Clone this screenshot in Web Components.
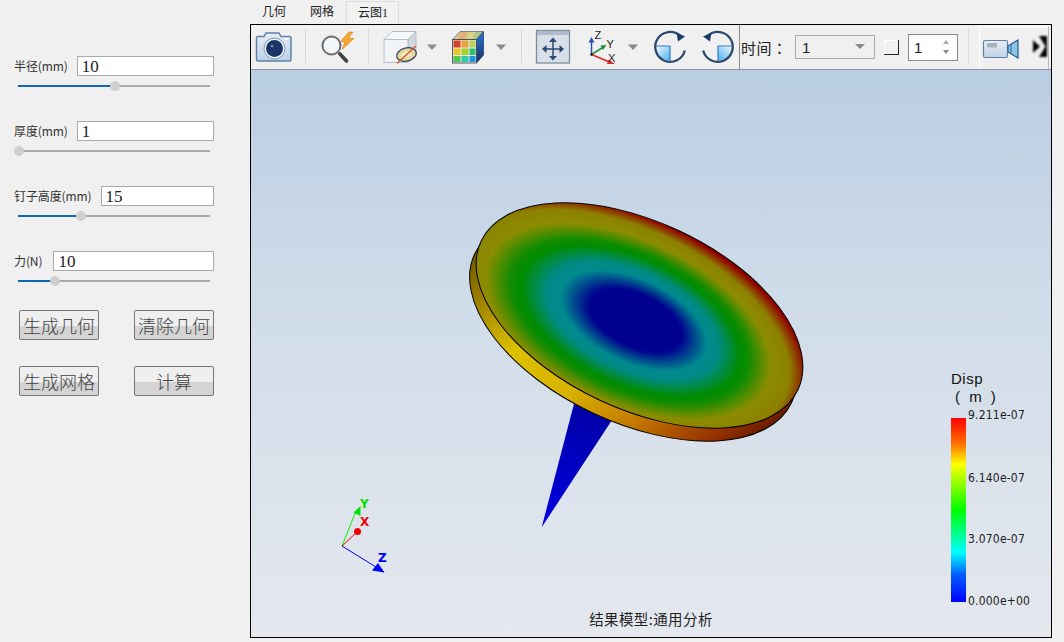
<!DOCTYPE html>
<html>
<head>
<meta charset="utf-8">
<style>
    html, body { margin: 0; height: 100%; background: #f0f0f0; overflow: hidden; }
    body { font-family: "Noto Sans CJK SC", "Liberation Sans", sans-serif; }
    svg { display: block; }
</style>
</head>
<body>
<app-shell>
    <side-panel slot="side">
        <param-row label="半径(mm)" value="10" percent="51"></param-row>
        <param-row label="厚度(mm)" value="1" percent="0"></param-row>
        <param-row label="钉子高度(mm)" value="15" percent="33"></param-row>
        <param-row label="力(N)" value="10" percent="19" gap="11"></param-row>
        <div slot="buttons">
            <push-button>生成几何</push-button>
            <push-button>清除几何</push-button>
            <push-button>生成网格</push-button>
            <push-button>计算</push-button>
        </div>
    </side-panel>
    <tab-bar slot="tabs">
        <tab-item>几何</tab-item>
        <tab-item>网格</tab-item>
        <tab-item active>云图1</tab-item>
    </tab-bar>
    <tool-bar slot="toolbar">
        <tool-button w="54">
            <svg width="54" height="44" viewBox="251 25 54 44">
                <defs><linearGradient id="camBody" x1="0" y1="0" x2="0" y2="1"><stop offset="0" stop-color="#e6eef7"/><stop offset="1" stop-color="#bcd0e6"/></linearGradient></defs>
                <path d="M258 36.500h6l2-3.500h13l2 3.500h8.500a1.500 1.500 0 0 1 1.500 1.500v21.500a1.500 1.500 0 0 1-1.500 1.500h-31.500a1.500 1.500 0 0 1-1.500-1.500v-21.500a1.500 1.500 0 0 1 1.500-1.500z" fill="url(#camBody)" stroke="#5f82a8" stroke-width="1.500"/>
                <circle cx="274.500" cy="48.500" r="10.500" fill="#f2f6fa" stroke="#7c98b6"/>
                <circle cx="274.500" cy="48.500" r="8.500" fill="#1c3566"/>
                <circle cx="272" cy="46" r="1.300" fill="#6f8fc0"/>
                <rect x="284" y="38" width="4" height="2" fill="#ffffff"/>
            </svg>
        </tool-button>
        <tool-sep></tool-sep>
        <tool-button w="62">
            <svg width="62" height="44" viewBox="306 25 62 44">
                <circle cx="331.500" cy="45.500" r="9" fill="#f4f5f6" stroke="#6a6f75" stroke-width="2"/>
                <path d="M338 52l2 2" stroke="#8a8f94" stroke-width="2.500"/>
                <path d="M340 54l6.500 7" stroke="#3d4247" stroke-width="3.600" stroke-linecap="round"/>
                <path d="M349 32l-8.500 9.500 4.500.5-3 7.500 12-11-5.500-.5 4.500-6z" fill="#f2a72e" stroke="#d87d16" stroke-width=".6"/>
            </svg>
        </tool-button>
        <tool-sep></tool-sep>
        <tool-button w="76">
            <svg width="76" height="44" viewBox="369 25 76 44">
                <path d="M384 39.500l8-8h24l-8 8z" fill="#f7f8f9" stroke="#b4bfca"/>
                <path d="M408 39.500l8-8v23l-8 8z" fill="#d3d7dc" stroke="#b4bfca"/>
                <rect x="384" y="39.500" width="24" height="23" fill="#f1f3f5" stroke="#b4bfca"/>
                <ellipse cx="406.500" cy="54.500" rx="10" ry="6.500" transform="rotate(-14 406.500 54.500)" fill="#e8d79c" stroke="#2f4560" stroke-width="1.300"/>
                <ellipse cx="406.500" cy="54.500" rx="5.500" ry="3" transform="rotate(-14 406.500 54.500)" fill="#f0e7c4"/>
                <path d="M397 63.500l19-17.500" stroke="#cc5a2c" stroke-width="1.500"/>
                <path d="M427 44.500h10l-5 5.500z" fill="#8a8a8a"/>
            </svg>
        </tool-button>
        <tool-button w="76">
            <svg width="76" height="44" viewBox="445 25 76 44">
                <defs><linearGradient id="cubeSide" x1="0" y1="0" x2="0" y2="1"><stop offset="0" stop-color="#2a78d8"/><stop offset="1" stop-color="#16305e"/></linearGradient></defs>
                <path d="M452.500 39.500l7.500-8h23.500l-7 8z" fill="#d9c68c" stroke="#555f6a" stroke-width=".7"/>
                <path d="M461 32h6.500l-2 7h-7z" fill="#e6b07a"/><path d="M468.500 32h6.500l-3 7h-5.500z" fill="#d9d48a"/><path d="M476 32h6.500l-6 7h-3.500z" fill="#a9c98c"/>
                <path d="M476.500 39.500l7-8v23.500l-7 8z" fill="url(#cubeSide)" stroke="#1b3560" stroke-width=".7"/>
                <rect x="452.500" y="39.500" width="24" height="23.500" fill="#e8e8d8" stroke="#2a3a50" stroke-width=".8"/>
                <rect x="453.500" y="40.500" width="7" height="7" fill="#d8402a"/><rect x="461.500" y="40.500" width="7" height="7" fill="#eaa23e"/><rect x="469.500" y="40.500" width="6" height="7" fill="#b8d060"/>
                <rect x="453.500" y="48.500" width="7" height="6.500" fill="#e8c424"/><rect x="461.500" y="48.500" width="7" height="6.500" fill="#a4d030"/><rect x="469.500" y="48.500" width="6" height="6.500" fill="#30c070"/>
                <rect x="453.500" y="56" width="7" height="6" fill="#50c850"/><rect x="461.500" y="56" width="7" height="6" fill="#30c8a8"/><rect x="469.500" y="56" width="6" height="6" fill="#2292e0"/>
                <path d="M496 44.500h10l-5 5.500z" fill="#8a8a8a"/>
            </svg>
        </tool-button>
        <tool-sep></tool-sep>
        <tool-button w="58">
            <svg width="58" height="44" viewBox="522 25 58 44">
                <rect x="536.500" y="30.500" width="33" height="32.500" fill="#d8dfe8" stroke="#7d8da0" stroke-width="1.300"/>
                <rect x="537" y="31" width="32" height="4" fill="#aebccd"/>
                <path d="M553 41v16M545 49h16" stroke="#2c4a6e" stroke-width="1.500"/>
                <path d="M553 37.500l-4 4.500h8zM553 60.500l-4-4.500h8zM542 49l4.500-4v8zM564 49l-4.500-4v8z" fill="#2c4a6e"/>
            </svg>
        </tool-button>
        <tool-button w="65">
            <svg width="65" height="44" viewBox="580 25 65 44">
                <path d="M591.500 54.500v-13" stroke="#2850b0" stroke-width="1.500"/><path d="M591.500 37l-3 5.500h6z" fill="#2850b0"/>
                <path d="M591.500 54.500l12-7.500" stroke="#1e9040" stroke-width="1.500"/><path d="M606.500 45l-6 .5 2.500 4.500z" fill="#1e9040"/>
                <path d="M591.500 54.500l18 7.500" stroke="#e02828" stroke-width="1.500"/><path d="M615 64l-6.500-4.500-1.500 4.500z" fill="#e02828"/>
                <circle cx="591.500" cy="54.500" r="1.200" fill="#111"/>
                <text x="594.500" y="38.500" font-family="Liberation Sans" font-size="11" fill="#222">Z</text>
                <text x="606.500" y="48" font-family="Liberation Sans" font-size="11" fill="#222">Y</text>
                <text x="608" y="62" font-family="Liberation Sans" font-size="11" fill="#222">X</text>
                <path d="M628 44.500h10l-5 5.500z" fill="#8a8a8a"/>
            </svg>
        </tool-button>
        <tool-button w="47">
            <svg width="47" height="44" viewBox="645 25 47 44">
                <defs><linearGradient id="rotFill" x1="0" y1="0" x2="1" y2="1"><stop offset="0" stop-color="#f4fbff"/><stop offset="1" stop-color="#4cb2ec"/></linearGradient></defs>
                <path d="M670 46H655.500A14.500 14.500 0 0 0 670 60.500z" fill="url(#rotFill)"/>
                <path d="M655 46h15v14.500" fill="none" stroke="#2f7fc4" stroke-width="1.200"/>
                <path d="M680 35.500A15 15 0 1 0 684.800 50.500" fill="none" stroke="#2d4a6e" stroke-width="2.300"/>
                <path d="M676.500 32.500l8.500 4-7 5z" fill="#1d3c66"/>
            </svg>
        </tool-button>
        <tool-button w="47">
            <svg width="47" height="44" viewBox="692 25 47 44">
                <g transform="translate(1388 0) scale(-1 1)">
                    <path d="M670 46H655.500A14.500 14.500 0 0 0 670 60.500z" fill="url(#rotFill)"/>
                    <path d="M655 46h15v14.500" fill="none" stroke="#2f7fc4" stroke-width="1.200"/>
                    <path d="M680 35.500A15 15 0 1 0 684.800 50.500" fill="none" stroke="#2d4a6e" stroke-width="2.300"/>
                    <path d="M676.500 32.500l8.500 4-7 5z" fill="#1d3c66"/>
                </g>
            </svg>
        </tool-button>
        <tool-sep dark></tool-sep>
        <time-box></time-box>
        <tool-sep></tool-sep>
        <record-box></record-box>
    </tool-bar>
    <result-view slot="view"></result-view>
</app-shell>

<script>
    class AppShell extends HTMLElement {
        constructor() {
            super();
            this.attachShadow({mode: 'open'}).innerHTML = `
            <style>
                :host { display: flex; height: 642px; width: 1064px; }
                #side { width: 250px; flex: none; }
                #main { width: 802px; display: flex; flex-direction: column; }
                #frame { height: 612px; border: 1px solid #000; display: flex; flex-direction: column; }
            </style>
            <div id="side"><slot name="side"></slot></div>
            <div id="main">
                <slot name="tabs"></slot>
                <div id="frame">
                    <slot name="toolbar"></slot>
                    <slot name="view"></slot>
                </div>
            </div>`;
        }
    }

    class SidePanel extends HTMLElement {
        constructor() {
            super();
            this.attachShadow({mode: 'open'}).innerHTML = `
            <style>
                :host { display: flex; flex-direction: column; gap: 20px; padding: 56px 36px 0 14px; }
                ::slotted([slot="buttons"]) {
                    display: grid; grid-template-columns: 80px 80px; column-gap: 35px; row-gap: 26px;
                    padding-left: 5px; margin-top: -6px;
                }
            </style>
            <slot></slot>
            <slot name="buttons"></slot>`;
        }
    }

    class ParamRow extends HTMLElement {
        connectedCallback() {
            let pct = this.getAttribute('percent');
            let gap = this.getAttribute('gap') || 9;
            this.attachShadow({mode: 'open'}).innerHTML = `
            <style>
                :host { display: block; height: 45px; color: #333; }
                #top { display: flex; align-items: center; gap: ${gap}px; height: 20px; }
                #label { font-size: 12px; line-height: 18px; margin-top: -1px; white-space: nowrap; letter-spacing: -.1px; }
                #value {
                    flex: 1; height: 18px; border: 1px solid #aaa; background: #fff; padding-left: 4px;
                    font: 17px/20px "Liberation Serif", serif; color: #222;
                }
                #track { position: relative; height: 2px; margin: 9px 4px 0 4px; background: #a9a9a9; }
                #fill { height: 2px; background: #0f67b8; width: ${pct}%; }
                #thumb {
                    position: absolute; top: -4px; left: calc(${pct}% * .98 - 4px); width: 10px; height: 10px;
                    border-radius: 50%; background: #cfcfcf;
                }
            </style>
            <div id="top"><span id="label">${this.getAttribute('label')}</span><div id="value">${this.getAttribute('value')}</div></div>
            <div id="track"><div id="fill"></div><div id="thumb"></div></div>`;
        }
    }

    class PushButton extends HTMLElement {
        constructor() {
            super();
            this.attachShadow({mode: 'open'}).innerHTML = `
            <style>
                :host {
                    display: flex; align-items: center; justify-content: center; height: 28px;
                    border: 1px solid #767676; border-radius: 2px; color: #444;
                    font: 300 18px/28px "Noto Sans CJK SC", sans-serif;
                    background: linear-gradient(#efefef 0, #efefef 54%, #d4d4d4 54%, #d4d4d4 100%);
                }
            </style><slot></slot>`;
        }
    }

    class TabBar extends HTMLElement {
        constructor() {
            super();
            this.attachShadow({mode: 'open'}).innerHTML = `
            <style>:host { display: flex; height: 24px; align-items: flex-end; }</style><slot></slot>`;
        }
    }

    class TabItem extends HTMLElement {
        constructor() {
            super();
            this.attachShadow({mode: 'open'}).innerHTML = `
            <style>
                :host {
                    display: block; height: 23px; padding: 0 12px; box-sizing: border-box; white-space: nowrap;
                    font: 12px/23px "Liberation Serif", "Noto Sans CJK SC", serif; color: #222;
                }
                :host([active]) { border: 1px solid #dcdcdc; border-bottom: 0; padding: 0 11px; background: #f2f2f2; width: 53px; }
            </style><slot></slot>`;
        }
    }

    class ToolBar extends HTMLElement {
        constructor() {
            super();
            this.attachShadow({mode: 'open'}).innerHTML = `
            <style>
                :host { display: flex; height: 44px; flex: none; background: #f0f0f0; border-bottom: 1px solid #8c959e; }
            </style><slot></slot>`;
        }
    }

    class ToolButton extends HTMLElement {
        connectedCallback() {
            this.attachShadow({mode: 'open'}).innerHTML = `
            <style>:host { display: block; flex: none; width: ${this.getAttribute('w')}px; height: 44px; }</style><slot></slot>`;
        }
    }

    class ToolSep extends HTMLElement {
        constructor() {
            super();
            this.attachShadow({mode: 'open'}).innerHTML = `
            <style>
                :host { display: block; flex: none; width: 1px; margin: 4px 0 6px; background: #d8d8d8; }
                :host([dark]) { margin: 0; background: #8a8a8a; }
            </style>`;
        }
    }

    class TimeBox extends HTMLElement {
        constructor() {
            super();
            this.attachShadow({mode: 'open'}).innerHTML = `
            <style>
                :host { display: flex; flex: none; width: 228px; height: 44px; align-items: center; color: #222; }
                #label {
                    width: 55px; padding-left: 1px; box-sizing: border-box; white-space: nowrap;
                    font: 15px "Noto Sans CJK TC", sans-serif; letter-spacing: .5px;
                }
                #combo {
                    width: 78px; height: 22px; border: 1px solid #aaa; display: flex; align-items: center;
                    justify-content: space-between; font: 15px "Liberation Sans", sans-serif;
                }
                #combo span { padding-left: 6px; }
                #combo i { border: 5px solid transparent; border-top: 5px solid #888; border-bottom: 0; margin: 0 9px 2px 0; }
                #check {
                    width: 15px; height: 15px; margin: 0 9px;
                    border-right: 1.500px solid #222; border-bottom: 1.500px solid #222; box-sizing: border-box;
                    box-shadow: inset 1px 1px 0 #fff;
                }
                #spin {
                    width: 48px; height: 25px; border: 1px solid #8a8a8a; background: #fff; display: flex;
                    align-items: center; justify-content: space-between; font: 15px "Liberation Sans", sans-serif;
                }
                #spin span { padding-left: 5px; }
                #arrows { display: flex; flex-direction: column; gap: 6px; margin-right: 8px; }
                #arrows i { display: block; width: 0; border: 3.500px solid transparent; }
                #arrows .up { border-top: 0; border-bottom: 4px solid #aaa; }
                #arrows .down { border-bottom: 0; border-top: 4px solid #888; }
            </style>
            <div id="label">时间：</div>
            <div id="combo"><span>1</span><i></i></div>
            <div id="check"></div>
            <div id="spin"><span>1</span><div id="arrows"><i class="up"></i><i class="down"></i></div></div>`;
        }
    }

    class RecordBox extends HTMLElement {
        constructor() {
            super();
            this.attachShadow({mode: 'open'}).innerHTML = `
            <style>
                :host {
                    display: block; flex: none; width: 68px; height: 42px; margin: 1px 0 0 10px;
                    border-top: 1px solid #fff; border-left: 1px solid #fff; border-right: 1px solid #b8b8b8;
                    overflow: hidden;
                }
                svg { display: block; }
            </style>
            <svg width="68" height="42" viewBox="980 27 68 42">
                <defs>
                    <linearGradient id="vid" x1="0" y1="0" x2="0" y2="1"><stop offset="0" stop-color="#e9eef5"/><stop offset="1" stop-color="#c3d1e2"/></linearGradient>
                    <filter id="soft"><feGaussianBlur stdDeviation=".9"/></filter>
                </defs>
                <rect x="983.500" y="40.500" width="24" height="17" rx="1.500" fill="url(#vid)" stroke="#5f82a8" stroke-width="1.200"/>
                <rect x="987" y="43" width="10" height="4.500" fill="#a9b1ba"/>
                <path d="M1008 46l10-6v18l-10-6z" fill="#8cc6ea" stroke="#2c5c8c" stroke-width="1.200"/>
                <path d="M1011 45v8" stroke="#2c5c8c"/>
                <g filter="url(#soft)">
                    <path d="M1039 36h8v21h-8l6.500-10.500z" fill="#000"/>
                    <path d="M1033 40l7 6.500-7 6.500z" fill="#000"/>
                </g>
            </svg>`;
        }
    }

    class ResultView extends HTMLElement {
        constructor() {
            super();
            this.attachShadow({mode: 'open'}).innerHTML = `
            <style>
                :host {
                    display: block; position: relative; flex: 1; overflow: hidden;
                    background: linear-gradient(#b9cde3 0%, #cfdce9 40%, #e5e8ee 100%);
                }
                svg { position: absolute; left: 0; top: 0; display: block; }
                #legend { position: absolute; left: 700px; top: 300px; width: 96px; }
                #title { font: 15px/17.500px "Liberation Sans", sans-serif; letter-spacing: .5px; color: #111; height: 48px; }
                #title div { white-space: pre; }
                #unit { padding-left: 4px; word-spacing: 4px; }
                #scale { position: absolute; left: 0; top: 48px; width: 15px; height: 184px;
                    background: linear-gradient(#ff0000 0%, #ff7000 14%, #ffff00 25%, #00ff00 50%, #00ffff 73%, #0060ff 85%, #0000ff 100%); }
                .tick { position: absolute; left: 17px; font: 12px/14px "DejaVu Sans Condensed", "Liberation Sans", sans-serif; letter-spacing: .2px; color: #222; white-space: nowrap; }
                #caption {
                    position: absolute; left: 0; right: 0; bottom: 8px; text-align: center;
                    font-size: 14.500px; letter-spacing: .4px; line-height: 20px; color: #222;
                }
            </style>
            <svg width="800" height="567" viewBox="251 70 800 567">
                <defs>
                    <radialGradient id="rings" cx=".47" cy=".565" r=".56" fx=".505" fy=".52">
                        <stop offset="0" stop-color="#00008e"/>
                        <stop offset=".25" stop-color="#00008e"/>
                        <stop offset=".4" stop-color="#008a8f"/>
                        <stop offset=".47" stop-color="#008a84"/>
                        <stop offset=".6" stop-color="#008c00"/>
                        <stop offset=".65" stop-color="#108c00"/>
                        <stop offset=".78" stop-color="#8c8c00"/>
                        <stop offset=".89" stop-color="#8c8000"/>
                        <stop offset="1" stop-color="#900000"/>
                    </radialGradient>
                    <linearGradient id="rim" gradientUnits="userSpaceOnUse" x1="470" y1="260" x2="800" y2="420">
                        <stop offset="0" stop-color="#5f4c00"/>
                        <stop offset=".12" stop-color="#8f7200"/>
                        <stop offset=".32" stop-color="#dcc000"/>
                        <stop offset=".5" stop-color="#d8b400"/>
                        <stop offset=".68" stop-color="#c47a00"/>
                        <stop offset=".85" stop-color="#963000"/>
                        <stop offset="1" stop-color="#3c0800"/>
                    </linearGradient>
                    <linearGradient id="cone" gradientUnits="userSpaceOnUse" x1="590" y1="410" x2="555" y2="510">
                        <stop offset="0" stop-color="#0000a8"/>
                        <stop offset="1" stop-color="#0000d8"/>
                    </linearGradient>
                </defs>
                <path d="M575 400L541.700 527.300L612 420z" fill="url(#cone)"/>
                <ellipse cx="633" cy="328.500" rx="175" ry="93.600" transform="rotate(25.100 633 328.500)" fill="url(#rim)" stroke="#000" stroke-width="1"/>
                <ellipse cx="639.500" cy="315.500" rx="175" ry="93.600" transform="rotate(25.100 639.500 315.500)" fill="url(#rings)"/>
                <ellipse cx="639.500" cy="315.500" rx="175" ry="93.600" transform="rotate(25.100 639.500 315.500)" fill="none" stroke="#000" stroke-width="1"/>

                <path d="M342 546L356 511" stroke="#00f000" stroke-width="1"/>
                <path d="M353.500 512.500L360.500 506V516z" fill="#00e000"/>
                <path d="M342 546L357 532" stroke="#f00000" stroke-width="1"/>
                <circle cx="357.500" cy="531.500" r="3.500" fill="#f00000"/>
                <path d="M342 546L384 572" stroke="#0000f0" stroke-width="1"/>
                <path d="M384.500 572.500L372 570.500L378 563z" fill="#0000f0"/>
                <text x="360" y="508" font-family="DejaVu Sans" font-weight="bold" font-size="12" fill="#00e000">Y</text>
                <text x="360" y="526" font-family="DejaVu Sans" font-weight="bold" font-size="12" fill="#f00000">X</text>
                <text x="378" y="562" font-family="DejaVu Sans" font-weight="bold" font-size="12" fill="#0000f0">Z</text>
            </svg>
            <div id="legend">
                <div id="title"><div>Disp</div><div id="unit">( m )</div></div>
                <div id="scale"></div>
                <div class="tick" style="top: 38px">9.211e-07</div>
                <div class="tick" style="top: 101px">6.140e-07</div>
                <div class="tick" style="top: 162px">3.070e-07</div>
                <div class="tick" style="top: 224px">0.000e+00</div>
            </div>
            <div id="caption">结果模型:通用分析</div>`;
        }
    }

    customElements.define('app-shell', AppShell);
    customElements.define('side-panel', SidePanel);
    customElements.define('param-row', ParamRow);
    customElements.define('push-button', PushButton);
    customElements.define('tab-bar', TabBar);
    customElements.define('tab-item', TabItem);
    customElements.define('tool-bar', ToolBar);
    customElements.define('tool-button', ToolButton);
    customElements.define('tool-sep', ToolSep);
    customElements.define('time-box', TimeBox);
    customElements.define('record-box', RecordBox);
    customElements.define('result-view', ResultView);
</script>
</body>
</html>
